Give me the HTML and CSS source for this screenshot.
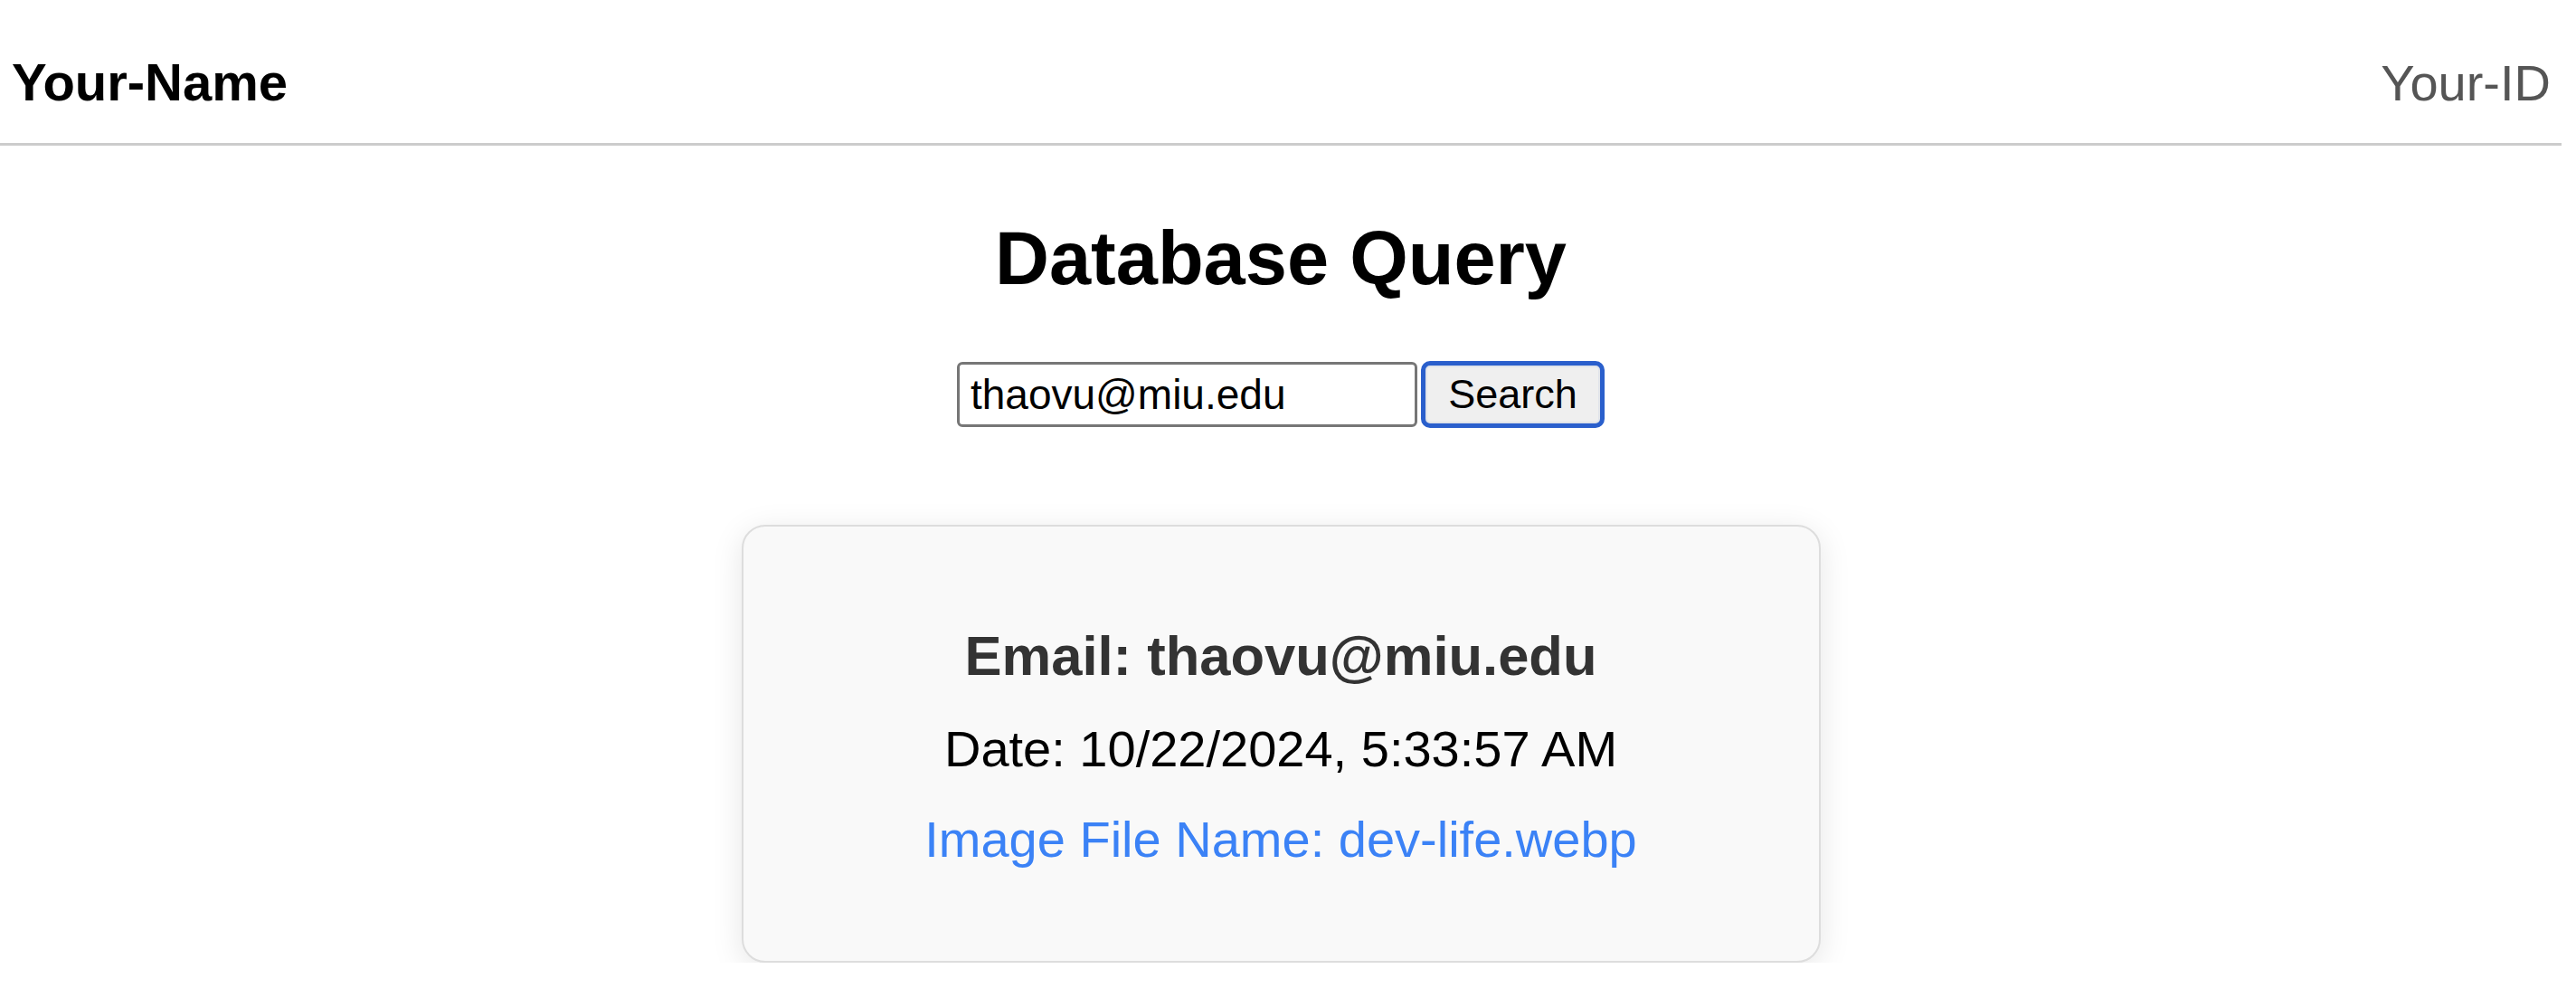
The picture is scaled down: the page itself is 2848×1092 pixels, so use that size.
FILE: index.html
```html
<!DOCTYPE html>
<html lang="en">
<head>
<meta charset="utf-8">
<title>Database Query</title>
<link rel="stylesheet" href="styles.css">
</head>
<body>
<div class="page">
  <header class="topbar">
    <span class="name">Your-Name</span>
    <span class="id">Your-ID</span>
  </header>
  <main class="main">
    <h1 class="title">Database Query</h1>
    <form class="search" onsubmit="return false;">
      <input class="search-input" type="text" value="thaovu@miu.edu">
      <button class="search-btn" type="submit">Search</button>
    </form>
    <section class="card">
      <h3 class="card-email">Email: thaovu@miu.edu</h3>
      <p class="card-date">Date: 10/22/2024, 5:33:57 AM</p>
      <p class="card-file">Image File Name: dev-life.webp</p>
    </section>
  </main>
</div>
</body>
</html>
```

FILE: styles.css
```css
html, body {
  margin: 0;
  padding: 0;
  background: #ffffff;
}

body {
  font-family: "Liberation Sans", Arial, Helvetica, sans-serif;
  color: #000;
}

.page {
  width: calc(100% - 16px);
}

.topbar {
  display: flex;
  justify-content: space-between;
  align-items: baseline;
  padding: 59px 12px 34px 13px;
  line-height: 64px;
  font-size: 56px;
  border-bottom: 3px solid #cccccc;
}

.name {
  font-weight: 700;
  font-size: 58px;
  color: #000;
}

.id {
  color: #555555;
}

.main {
  display: flex;
  flex-direction: column;
  align-items: center;
}

.title {
  margin: 76px 0 0;
  font-size: 83px;
  line-height: 97px;
  font-weight: 700;
  text-align: center;
}

.search {
  display: flex;
  align-items: center;
  gap: 4px;
  margin-top: 65px;
}

.search-input {
  box-sizing: border-box;
  width: 509px;
  height: 72px;
  border: 3px solid #767676;
  border-radius: 6px;
  padding: 0 12px;
  font-family: "Liberation Sans", Arial, sans-serif;
  font-size: 46px;
  color: #000;
  background: #fff;
  outline: none;
}

.search-btn {
  box-sizing: border-box;
  width: 203px;
  height: 74px;
  border: 5px solid #2a5fcc;
  border-radius: 10px;
  background: #efefef;
  box-shadow: inset 0 0 0 2px #dfe3ea;
  font-family: "Liberation Sans", Arial, sans-serif;
  font-size: 45px;
  color: #000;
  padding: 0;
}

.card {
  box-sizing: border-box;
  width: 1193px;
  margin-top: 107px;
  padding: 107px 56px 102px;
  background: #f9f9f9;
  border: 2px solid #dddddd;
  border-radius: 26px;
  box-shadow: 0 7px 35px rgba(0, 0, 0, 0.1);
  text-align: center;
}

.card-email {
  margin: 0 0 36px;
  font-size: 61.5px;
  line-height: 71px;
  font-weight: 700;
  color: #333333;
}

.card-date {
  margin: 0 0 36px;
  font-size: 56px;
  line-height: 64px;
  color: #000;
}

.card-file {
  margin: 0;
  font-size: 56px;
  line-height: 64px;
  color: #3b82f6;
}
```
